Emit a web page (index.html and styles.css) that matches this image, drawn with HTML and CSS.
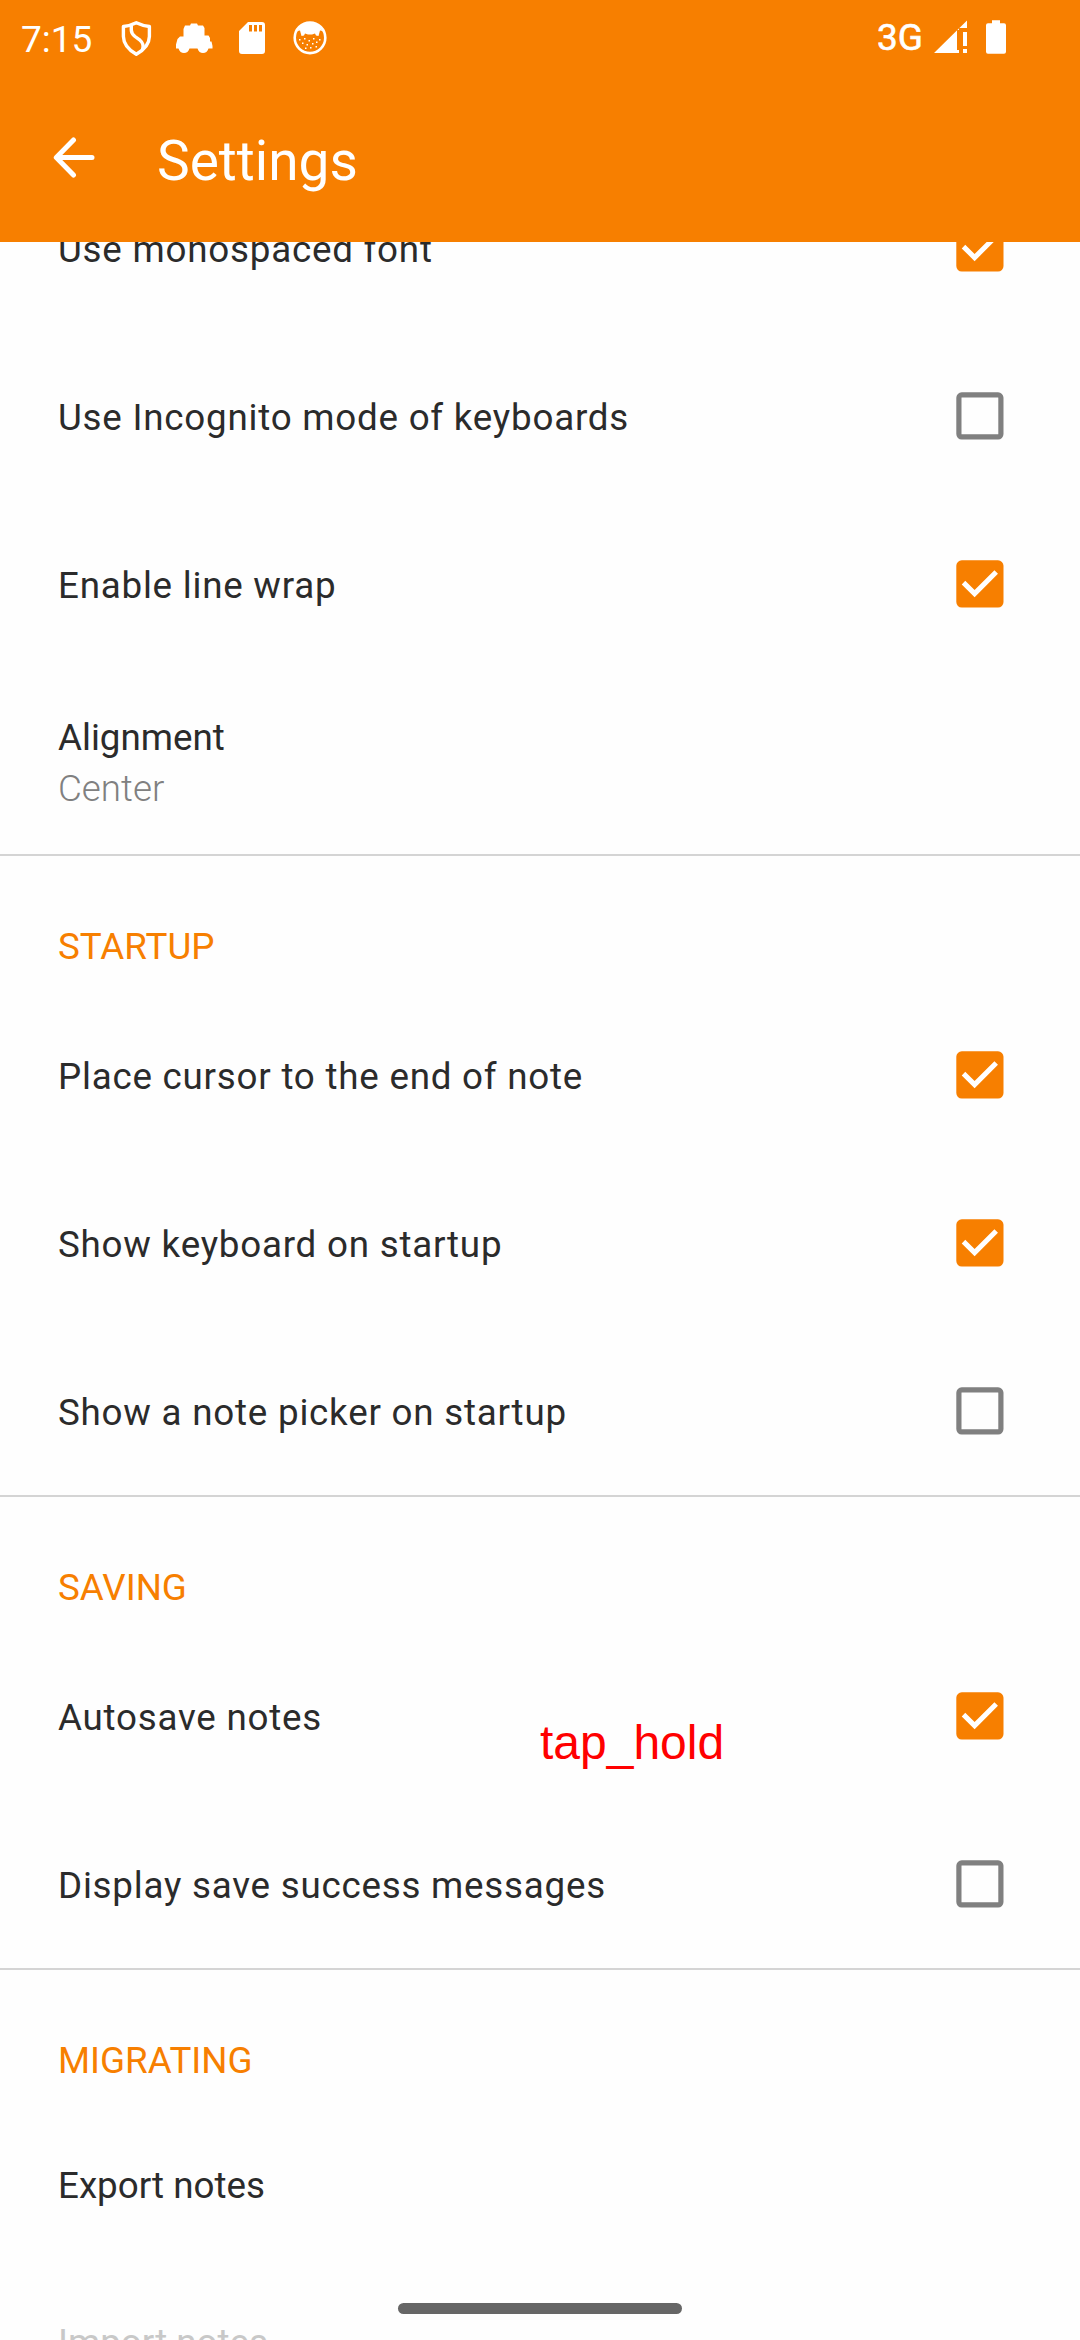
FILE: index.html
```html
<!DOCTYPE html>
<html lang="en">
<head>
<meta charset="utf-8">
<title>Settings</title>
<link rel="stylesheet" href="styles.css">
</head>
<body>
<svg class="defs" width="0" height="0" aria-hidden="true">
  <symbol id="checked" viewBox="0 0 48 48">
    <rect x="0.3" y="0.3" width="47.2" height="47.2" rx="5.5" fill="#f77f00"/>
    <path d="M7.500 22.600 18.600 33.600 40.200 12" fill="none" stroke="#fff" stroke-width="5"/>
  </symbol>
  <symbol id="unchecked" viewBox="0 0 48 48">
    <rect x="2.9" y="2.9" width="42" height="42" rx="2.8" fill="none" stroke="#808080" stroke-width="5.2"/>
  </symbol>
</svg>
<div class="screen">
  <header class="top">
    <div class="status">
      <span class="clock">7:15</span>
      <svg class="notices" width="210" height="44" viewBox="120 16 210 44">
        <g fill="none" stroke="#fff" stroke-width="3.4" stroke-linejoin="round">
          <path d="M136.300 22.800Q143 26 149.400 26.500V36.500Q149.200 47 136.300 54.300Q123.600 47 123.400 36.500V26.500Q130 26 136.300 22.800Z"/>
          <path d="M131.300 25.500V30Q131.300 33.500 135 36.500L140 40.200Q144.500 44 142.500 49.500"/>
        </g>
        <path fill="#fff" d="M185 25.500H190L191 23.500H197L198 25.500H203L204.500 28V35.500H208.500L210 38V41.500H211.500L212.500 46V48.500H208.500Q207 53 203 53Q199 53 197.500 48.500H189.500Q188 53 184 53Q180 53 178.500 48.500H176V44.500L177.500 39L180 36.500H183.500V29Z"/>
        <path fill="#fff" fill-rule="evenodd" d="M248 22H262Q265 22 265 25V51Q265 54 262 54H242Q239 54 239 51V31ZM249 25V31.500H252V25ZM254 25V31.500H257V25ZM259 25V31.500H262V25Z"/>
        <circle cx="310" cy="37.800" r="15.300" fill="none" stroke="#fff" stroke-width="2.600"/>
        <path fill="#fff" d="M297.500 31Q302 22 310 22Q318 22 322.500 31L320 30.500L318.500 36L316 35.500L315 33.500L312 34.500H308L305 33.500L304 35.500L301.500 36L300 30.500Z"/>
        <path fill="#fff" d="M299 39h1.500v1.500h-1.500zM304 38h1.500v1.500h-1.500zM308.500 40h1.500v1.500h-1.500zM313 38h1.500v1.500h-1.500zM319 39h1.500v1.500h-1.500zM302 42.500h1.500v1.500h-1.500zM306.500 44h1.500v1.500h-1.500zM312 43h1.500v1.500h-1.500zM316 41.500h1.500v1.500h-1.500zM310 47h1.500v1.500h-1.500zM305 47.500h1.500v1.500h-1.500zM315.500 46h1.500v1.500h-1.500z"/>
      </svg>
      <span class="network">3G</span>
      <svg class="signals" width="76" height="40" viewBox="932 18 76 40">
        <path fill="#fff" d="M934 53 967 20.500V28H959V30H957V50H959V53ZM963 32H967V46H963ZM963 49H967V53H963Z"/>
        <path fill="#fff" d="M992 20.200H1000V23.200H1004Q1006 23.200 1006 25.200V51.700Q1006 53.700 1004 53.700H988Q986 53.700 986 51.700V25.200Q986 23.200 988 23.200H992Z"/>
      </svg>
    </div>
    <div class="bar">
      <svg class="back" width="42" height="42" viewBox="0 0 42 42"><path d="M20.500 3 3.300 20.500 20.500 38M4 20.500H39" fill="none" stroke="#fff" stroke-width="5" stroke-linecap="round" stroke-linejoin="round"/></svg>
      <h1>Settings</h1>
    </div>
  </header>
  <main class="list">
    <section>
      <label class="row"><span>Use monospaced font</span><svg class="box"><use href="#checked"/></svg></label>
      <label class="row"><span>Use Incognito mode of keyboards</span><svg class="box"><use href="#unchecked"/></svg></label>
      <label class="row"><span>Enable line wrap</span><svg class="box"><use href="#checked"/></svg></label>
      <div class="choice"><span>Alignment</span><small>Center</small></div>
    </section>
    <section class="group">
      <h2>STARTUP</h2>
      <label class="row"><span>Place cursor to the end of note</span><svg class="box"><use href="#checked"/></svg></label>
      <label class="row"><span>Show keyboard on startup</span><svg class="box"><use href="#checked"/></svg></label>
      <label class="row"><span>Show a note picker on startup</span><svg class="box"><use href="#unchecked"/></svg></label>
    </section>
    <section class="group">
      <h2>SAVING</h2>
      <label class="row"><span>Autosave notes</span><svg class="box"><use href="#checked"/></svg></label>
      <label class="row"><span>Display save success messages</span><svg class="box"><use href="#unchecked"/></svg></label>
    </section>
    <section class="group">
      <h2>MIGRATING</h2>
      <div class="action"><span>Export notes</span></div>
      <div class="action faded"><span>Import notes</span></div>
    </section>
  </main>
  <div class="tap">tap_hold</div>
  <div class="handle"></div>
</div>
</body>
</html>
```
FILE: styles.css
```css
* { box-sizing: border-box; }
body { margin: 0; background: #fefefe; font-family: Roboto, sans-serif; font-size: 36.75px; color: #2b2b2b; }
.defs { position: absolute; }
.screen { position: relative; width: 1080px; height: 2340px; overflow: hidden; display: flex; flex-direction: column; }
.top { flex: none; height: 242px; background: #f77f00; color: #fff; }
.status { height: 76px; display: flex; align-items: center; padding-left: 21px; }
.clock { width: 99px; font-size: 37px; line-height: 44px; padding-top: 3px; }
.notices { flex: none; }
.network { margin-left: 547px; width: 55px; font-size: 37px; line-height: 44px; -webkit-text-stroke: 0.6px #fff; }
.signals { flex: none; }
.bar { height: 166px; display: flex; align-items: center; padding: 0 0 2px 53px; }
.back { margin-bottom: 1px; }
h1 { margin: 0 0 0 62px; font-size: 55px; font-weight: 400; line-height: 64px; padding-top: 5px; }
.list { flex: 1; min-height: 0; overflow: hidden; }
.list > section:first-child { margin-top: -78px; height: 690px; }
.row { height: 168px; padding: 0 76px 0 58px; display: flex; align-items: center; justify-content: space-between; letter-spacing: 0.77px; }
.row span { line-height: 44px; padding-top: 4px; }
.box { width: 48px; height: 48px; }
.choice { padding: 48px 0 0 58px; display: flex; flex-direction: column; line-height: 44px; }
.choice small { font-size: 36.75px; font-weight: 300; color: #808080; line-height: 44px; margin-top: 7px; }
.group { border-top: 2px solid #d4d4d4; }
h2 { margin: 0; height: 135px; padding: 69px 0 0 58px; font-size: 36.75px; font-weight: 400; line-height: 44px; color: #f77f00; }
.action { height: 157px; padding: 59px 0 0 58px; line-height: 44px; }
.faded { color: #c8c8c8; }
.tap { position: absolute; left: 540px; top: 1716px; font: 48px/54px "Liberation Sans", Arial, sans-serif; color: #f00; }
.handle { position: absolute; left: 398px; top: 2303px; width: 284px; height: 11px; border-radius: 5.5px; background: #666; }
```
